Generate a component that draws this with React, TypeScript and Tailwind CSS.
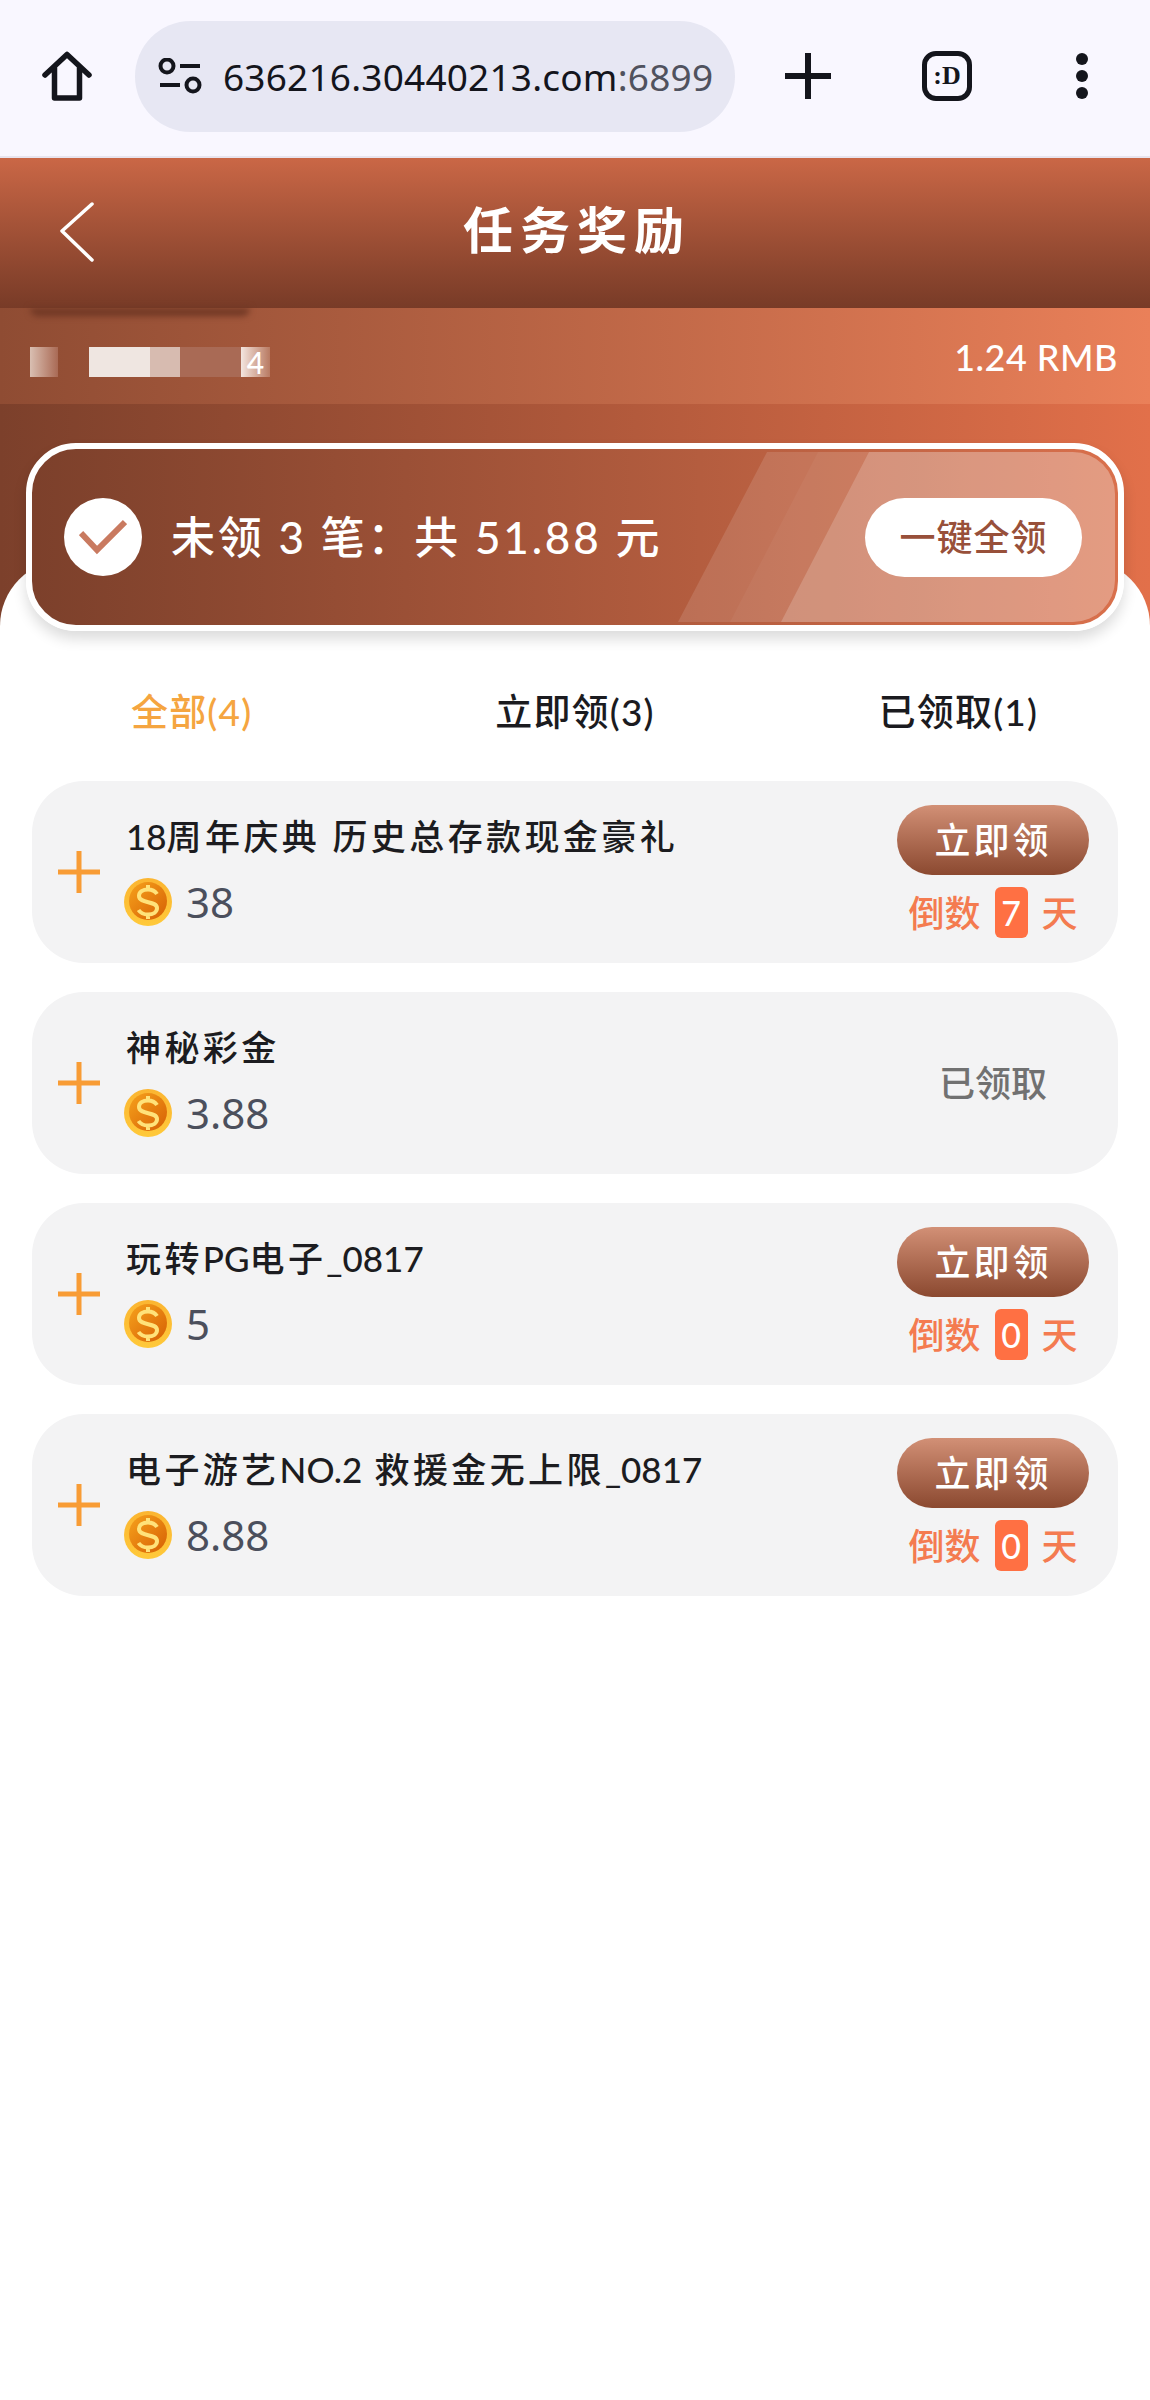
const cjk = "font-['Lato','Noto_Sans_CJK_SC',sans-serif]";

type Task = {
  title: string;
  amount: string;
  days?: number;
};

const tasks: Task[] = [
  { title: "18周年庆典 历史总存款现金豪礼", amount: "38", days: 7 },
  { title: "神秘彩金", amount: "3.88" },
  { title: "玩转PG电子_0817", amount: "5", days: 0 },
  { title: "电子游艺NO.2 救援金无上限_0817", amount: "8.88", days: 0 },
];

// only the chinese runs are spaced out in the titles, latin and digits stay tight
function Title({ text }: { text: string }) {
  return (
    <>
      {text.split(/([A-Za-z0-9._]+)/).map((part, i) =>
        i % 2 === 1 ? (
          <span key={i} className="tracking-normal">{part}</span>
        ) : (
          <span key={i}>{part}</span>
        )
      )}
    </>
  );
}

function Coin() {
  return (
    <svg width="48" height="48" viewBox="0 0 48 48" className="-ml-[2px] shrink-0">
      <defs>
        <linearGradient id="coinRim" x1="0" y1="0" x2="0" y2="1">
          <stop offset="0" stopColor="#fbb531" />
          <stop offset="1" stopColor="#ffc93a" />
        </linearGradient>
        <linearGradient id="coinFace" x1="0" y1="0" x2="1" y2="1">
          <stop offset="0" stopColor="#f6a21c" />
          <stop offset="1" stopColor="#d65f04" />
        </linearGradient>
      </defs>
      <circle cx="24" cy="24" r="24" fill="url(#coinRim)" />
      <circle cx="24" cy="23" r="19" fill="url(#coinFace)" />
      <path d="M33 16c-2-3-5-4.500-9-4.500-5 0-9 2.500-9 6.500 0 8 18 4.500 18 12 0 4-4 6.500-9 6.500-4 0-7.500-1.500-9.500-4.500M24 7v5M24 36v5" fill="none" stroke="#ffe27a" strokeWidth="4" />
    </svg>
  );
}

function BrowserBar() {
  return (
    <div className="flex h-[158px] items-center border-b-2 border-[#e8e4ee] bg-[#f9f7ff] pb-[4px]">
      <svg width="50" height="50" viewBox="0 0 50 50" fill="none" stroke="#14151c" strokeWidth="5.500" strokeLinejoin="round" strokeLinecap="round" className="ml-[42px]">
        <path d="M3 24 25 3.500 47 24M12.500 17v30h25V17" />
      </svg>
      <div className="ml-[43px] flex h-[111px] w-[600px] items-center rounded-full bg-[#e7e7f3] pl-[23px]">
        <svg width="44" height="36" viewBox="0 0 44 36" fill="none" stroke="#14151c" strokeWidth="4">
          <circle cx="9" cy="8" r="6.500" />
          <path d="M22 8h20M2 27h20" />
          <circle cx="35" cy="27" r="6.500" />
        </svg>
        <span className="ml-[21px] text-[37px] leading-none tracking-[0.2px] text-[#14151c] font-['Noto_Sans',sans-serif]">
          636216.30440213.com<span className="text-[#50525e]">:6899</span>
        </span>
      </div>
      <svg width="46" height="46" viewBox="0 0 46 46" stroke="#14151c" strokeWidth="6" className="ml-[50px]">
        <path d="M23 0v46M0 23h46" />
      </svg>
      <div className="ml-[91px] flex h-[50px] w-[50px] items-center justify-center rounded-[14px] border-[5px] border-[#14151c] text-[26px] font-bold leading-none text-[#14151c] font-['Liberation_Serif',serif]">
        :D
      </div>
      <div className="ml-[104px] flex flex-col gap-[5px]">
        <div className="h-[12px] w-[12px] rounded-full bg-[#14151c]" />
        <div className="h-[12px] w-[12px] rounded-full bg-[#14151c]" />
        <div className="h-[12px] w-[12px] rounded-full bg-[#14151c]" />
      </div>
    </div>
  );
}

function Header() {
  return (
    <div className="relative flex h-[150px] items-center justify-center bg-gradient-to-b from-[#ca6746] to-[#783b27] pb-[7px] pl-[4px]">
      <svg width="36" height="60" viewBox="0 0 36 60" fill="none" stroke="#ffffff" strokeWidth="3.500" strokeLinecap="round" strokeLinejoin="round" className="absolute left-[59px] top-[44px]">
        <path d="M33 2 3 29l30 29" />
      </svg>
      <h1 className={`${cjk} text-[50px] font-bold leading-none tracking-[7px] text-white`}>任务奖励</h1>
    </div>
  );
}

function AccountBar() {
  return (
    <div className="relative flex h-[96px] items-center justify-between bg-gradient-to-r from-[#8f4c33] to-[#ea8059] pl-[30px] pr-[32px]">
      <div className="absolute left-[30px] top-0 h-[8px] w-[220px] rounded-b-full bg-[#6f3724] blur-[3px]" />
      <div className="mt-[12px] flex h-[30px] items-stretch">
        <div className="w-[28px] bg-gradient-to-r from-[#d9bfb2] to-[#a96a55]" />
        <div className="w-[31px]" />
        <div className="w-[61px] bg-[#efe6e1]" />
        <div className="w-[30px] bg-[#d7bbb0]" />
        <div className="w-[61px] bg-[#a96a55]" />
        <div className="flex w-[29px] items-center justify-center bg-gradient-to-r from-[#f3e6e0] to-[#b87a62] text-[30px] font-medium leading-none text-white font-['Lato',sans-serif]">4</div>
      </div>
      <span className={`${cjk} mt-[2px] text-[36px] font-medium leading-none tracking-[0.5px] text-white`}>1.24 RMB</span>
    </div>
  );
}

function ClaimCard() {
  return (
    <div className="relative z-10 h-[188px] rounded-[50px] border-[6px] border-white bg-gradient-to-r from-[#7c402b] to-[#d9704c] shadow-[0_8px_14px_rgba(0,0,0,0.14)]">
      <div className="absolute inset-[3px] overflow-hidden rounded-[42px]">
        <svg width="1082" height="170" viewBox="0 0 1082 170" className="absolute left-0 top-0">
          <polygon points="643,170 732,0 1082,0 1082,170" fill="#ffffff" fillOpacity="0.12" />
          <polygon points="695,170 783,0 1082,0 1082,170" fill="#ffffff" fillOpacity="0.04" />
          <polygon points="746,170 834,0 1082,0 1082,170" fill="#ffffff" fillOpacity="0.18" />
        </svg>
      </div>
      <div className="relative flex h-full items-center pl-[32px] pr-[36px]">
        <div className="flex h-[78px] w-[78px] items-center justify-center rounded-full bg-white">
          <svg width="48" height="36" viewBox="0 0 48 36" fill="none" stroke="#c97a60" strokeWidth="6">
            <path d="M2 14 18 31 46 3" />
          </svg>
        </div>
        <span className={`${cjk} ml-[29px] whitespace-pre text-[44px] font-medium leading-none tracking-[2.800px] text-white`}>未领 3 笔：共 51.88 元</span>
        <button className={`${cjk} ml-auto flex h-[79px] w-[217px] items-center justify-center rounded-full bg-white text-[36px] font-medium leading-none tracking-[1px] text-[#98503a]`}>
          一键全领
        </button>
      </div>
    </div>
  );
}

function Tabs() {
  return (
    <div className={`${cjk} grid h-[140px] grid-cols-3 items-center text-center text-[37px] font-medium leading-none tracking-[1.200px] text-[#1b1b1f]`}>
      <span className="text-[#f5a540]">全部(4)</span>
      <span>立即领(3)</span>
      <span>已领取(1)</span>
    </div>
  );
}

function TaskRow({ task }: { task: Task }) {
  return (
    <div className="flex h-[182px] items-center rounded-[52px] bg-[#f3f3f4] pl-[26px] pr-[29px]">
      <svg width="42" height="42" viewBox="0 0 42 42" stroke="#f89c35" strokeWidth="5" className="shrink-0">
        <path d="M21 0v42M0 21h42" />
      </svg>
      <div className="ml-[26px] flex flex-col">
        <div className={`${cjk} text-[35px] font-medium leading-none tracking-[3.400px] text-[#1c1c20]`}>
          <Title text={task.title} />
        </div>
        <div className="mt-[24px] flex items-center">
          <Coin />
          <span className="ml-[14px] text-[42px] leading-none text-[#4b4f5c] font-['Noto_Sans',sans-serif]">{task.amount}</span>
        </div>
      </div>
      {task.days !== undefined ? (
        <div className="ml-auto flex w-[192px] flex-col items-center self-start pt-[24px]">
          <button className={`${cjk} flex h-[70px] w-[192px] items-center justify-center rounded-full bg-gradient-to-b from-[#d29076] to-[#8b4930] text-[36px] font-medium leading-none tracking-[3px] text-white`}>
            立即领
          </button>
          <div className={`${cjk} mt-[12px] flex items-center text-[36px] font-medium leading-none text-[#f47b50]`}>
            <span>倒数</span>
            <span className="mx-[14px] flex h-[51px] w-[33px] items-center justify-center rounded-[6px] bg-[#ff7043] text-[34px] text-white">{task.days}</span>
            <span>天</span>
          </div>
        </div>
      ) : (
        <div className={`${cjk} ml-auto w-[192px] text-center text-[36px] font-medium leading-none text-[#717171]`}>已领取</div>
      )}
    </div>
  );
}

export default function App() {
  return (
    <div className="min-h-[2400px] w-[1150px] bg-white">
      <BrowserBar />
      <Header />
      <AccountBar />
      <div className="bg-gradient-to-r from-[#7c402b] to-[#e2704a] px-[26px] pt-[39px] pb-[9px]">
        <ClaimCard />
      </div>
      <div className="relative -mt-[80px] rounded-t-[66px] bg-white px-[32px] pt-[81px]">
        <div className="-mx-[32px]">
          <Tabs />
        </div>
        <div className="flex flex-col gap-[29px]">
          {tasks.map((task) => (
            <TaskRow key={task.title} task={task} />
          ))}
        </div>
      </div>
    </div>
  );
}
